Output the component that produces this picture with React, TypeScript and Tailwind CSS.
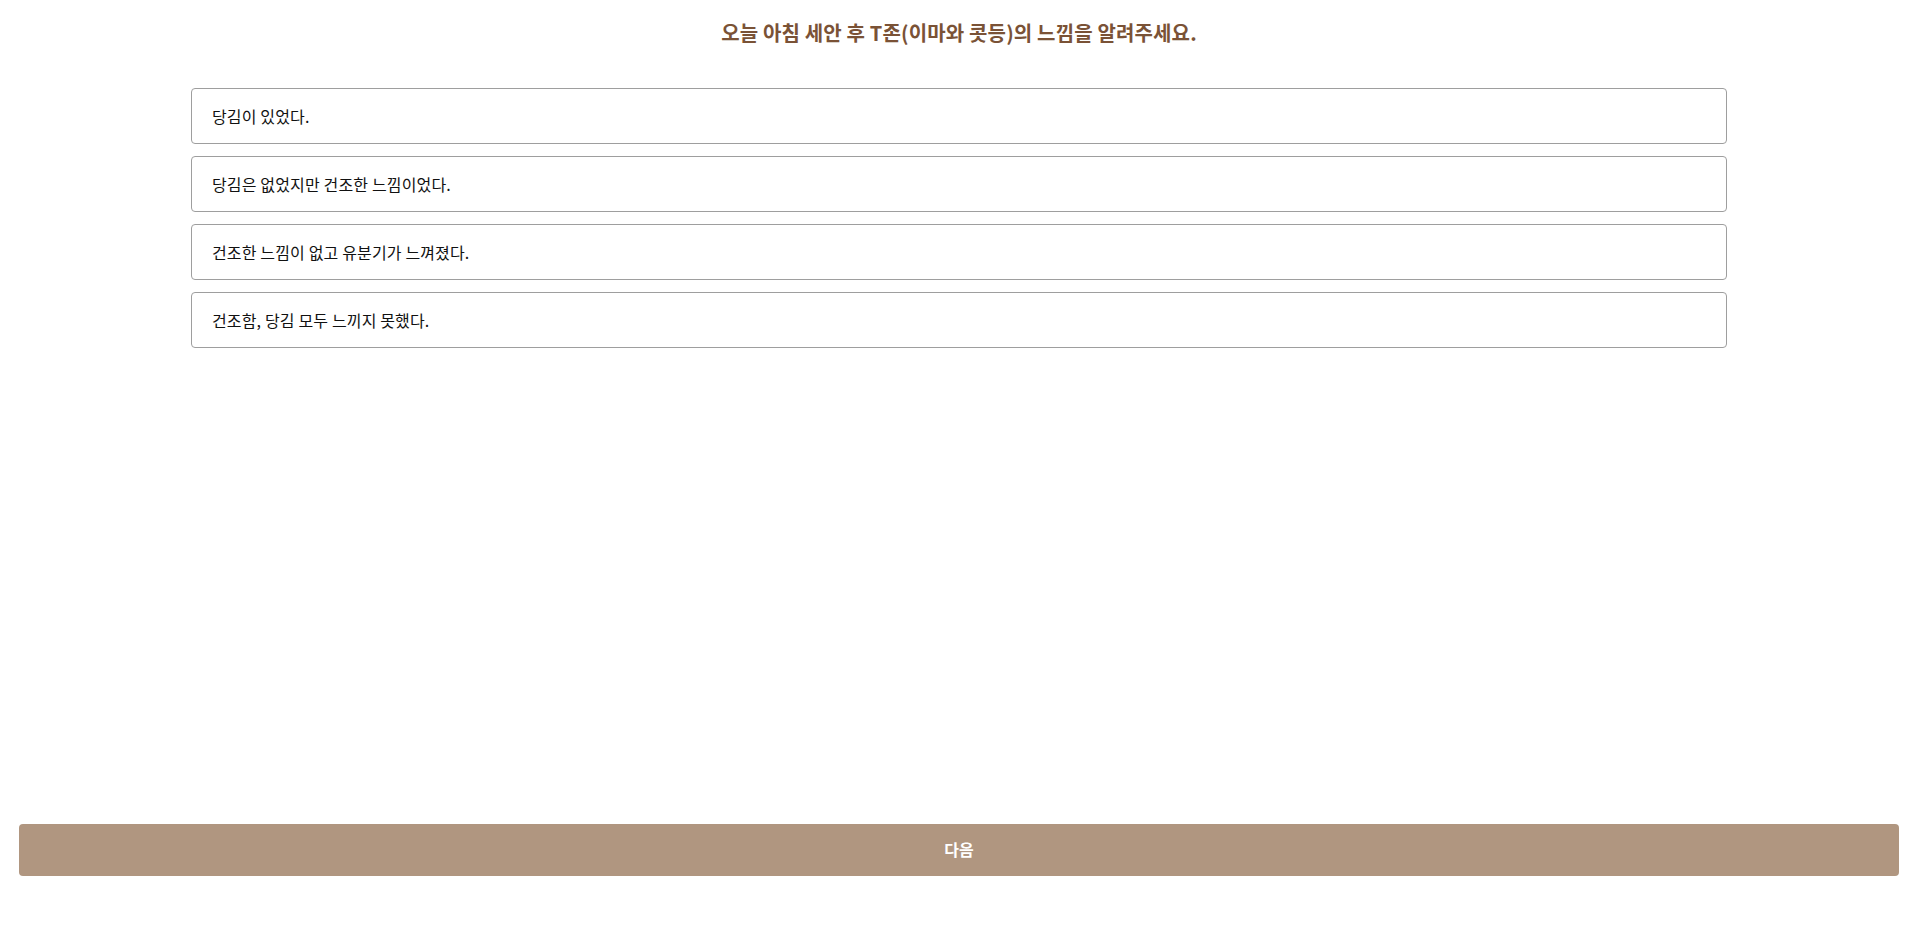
import React from "react";

const options = [
  "당김이 있었다.",
  "당김은 없었지만 건조한 느낌이었다.",
  "건조한 느낌이 없고 유분기가 느껴졌다.",
  "건조함, 당김 모두 느끼지 못했다.",
];

export default function App() {
  return (
    <div
      className="flex h-[932px] flex-col bg-white pl-[3px]"
      style={{ fontFamily: '"Noto Sans CJK KR", "Noto Sans", sans-serif' }}
    >
      <h1 className="pt-[19px] text-center text-[20px] font-bold leading-[28px] tracking-[0.15px] text-[#7a5236]">
        오늘 아침 세안 후 T존(이마와 콧등)의 느낌을 알려주세요.
      </h1>
      <div className="mx-auto mt-[41px] flex w-[1536px] flex-col gap-[12px]">
        {options.map((o) => (
          <button
            key={o}
            type="button"
            className="flex h-[56px] items-center rounded-[4px] border border-[#9e9e9e] bg-white px-[20px] text-left text-[16px] tracking-[0.15px] text-[#111111]"
          >
            {o}
          </button>
        ))}
      </div>
      <button
        type="button"
        className="mx-[16px] mt-auto mb-[56px] h-[52px] rounded-[4px] bg-[#b09680] pb-[3px] text-[16px] font-bold text-white"
      >
        다음
      </button>
    </div>
  );
}
